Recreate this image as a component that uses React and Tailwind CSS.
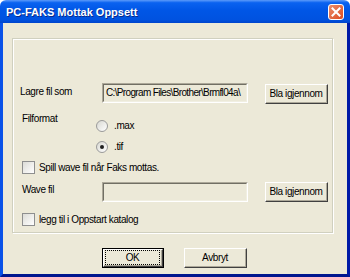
import React from 'react';

const font = { fontFamily: '"Liberation Sans", Arial, sans-serif' };

const ClassicButton = ({ children, isDefault = false, className = '' }) => (
  <div
    className={`flex items-center justify-center bg-[#ECE9D8] text-[10px] tracking-[-0.4px] text-black ${
      isDefault ? 'border border-black' : ''
    } ${className}`}
  >
    <div className="w-full h-full border-t border-l border-white border-r border-b border-r-[#404040] border-b-[#404040] flex items-center justify-center">
      <div className="w-full h-full border-r border-b border-[#ACA899] flex items-center justify-center">
        {isDefault ? (
          <span className="border border-dotted border-black px-[20px] leading-[13px]">{children}</span>
        ) : (
          <span className="leading-[13px] whitespace-nowrap">{children}</span>
        )}
      </div>
    </div>
  </div>
);

const Field = ({ value = '' }) => (
  <div className="w-[146px] h-[20px] border-t border-l border-[#ACA899] border-r border-b border-r-white border-b-white">
    <div className="w-full h-full border-t border-l border-[#716F64] border-r border-b border-r-[#F1EFE2] border-b-[#F1EFE2] bg-[#ECE9D8] leading-[16px] pl-[2px] tracking-[-0.65px] whitespace-nowrap overflow-hidden">
      {value}
    </div>
  </div>
);

const Checkbox = () => (
  <div className="w-[13px] h-[13px] border border-[#8E8F8F] bg-[linear-gradient(135deg,#dcdcd7,#ffffff)] shrink-0" />
);

const Radio = ({ checked }) => (
  <div className="w-[12px] h-[12px] rounded-full border border-[#9a9a9a] bg-[linear-gradient(135deg,#d8d8d2,#ffffff)] flex items-center justify-center shrink-0">
    {checked && <div className="w-[4px] h-[4px] rounded-full bg-[#1f1f1f]" />}
  </div>
);

export default function App() {
  return (
    <div className="w-[350px] h-[277px] flex flex-col overflow-hidden" style={font}>
      {/* title bar */}
      <div className="h-[23px] flex items-center justify-between pl-[6px] pr-[6px] rounded-t-[6px] bg-[linear-gradient(180deg,#5c9bfa_0%,#0a62f0_12%,#0056e6_45%,#0052e0_85%,#0045cc_100%)]">
        <span className="text-white font-bold text-[11px] [text-shadow:1px_1px_0_#0a2a8a] mt-[2px]">
          PC-FAKS Mottak Oppsett
        </span>
        <div className="w-[16px] h-[16px] mt-[1px] rounded-[3px] border border-white bg-[linear-gradient(135deg,#e98d6c,#dd4b21)] flex items-center justify-center">
          <svg width="10" height="10" viewBox="0 0 10 10">
            <path d="M1.5 1.5 L8.5 8.5 M8.5 1.5 L1.5 8.5" stroke="white" strokeWidth="2" strokeLinecap="square" />
          </svg>
        </div>
      </div>

      {/* body */}
      <div className="flex-1 flex flex-col bg-[#ECE9D8] border-l-[3px] border-l-[#0a52e8] border-r-[3px] border-r-[#0019a6] border-b-[3px] border-b-[#00168e] pl-[9px] pr-[14px] pt-[15px]">
        {/* group box */}
        <div className="h-[195px] border border-[#D0D0BF] shadow-[inset_1px_1px_0_#ffffff,1px_1px_0_#ffffff] flex flex-col pl-[7px] text-[10px] tracking-[-0.4px] text-black">
          <div className="mt-[44px] flex items-start h-[21px]">
            <span className="w-[82px] mt-[2px] leading-[13px]">Lagre fil som</span>
            <Field value="C:\Program Files\Brother\Brmfl04a\" />
            <ClassicButton className="ml-[17px] mt-[1px] w-[63px] h-[20px]">Bla igjennom</ClassicButton>
          </div>

          <div className="flex mt-[8px]">
            <span className="w-[76px] pl-[2px] leading-[13px]">Filformat</span>
            <div className="flex flex-col mt-[7px]">
              <div className="flex items-center h-[13px]">
                <Radio />
                <span className="ml-[6px] leading-[13px]">.max</span>
              </div>
              <div className="flex items-center h-[13px] mt-[8px]">
                <Radio checked />
                <span className="ml-[6px] leading-[13px]">.tif</span>
              </div>
            </div>
          </div>

          <div className="flex items-center mt-[8px] pl-[2px] h-[13px]">
            <Checkbox />
            <span className="ml-[4px] leading-[13px]">Spill wave fil når Faks mottas.</span>
          </div>

          <div className="flex items-start mt-[8px] h-[21px]">
            <span className="w-[82px] pl-[2px] mt-[1px] leading-[13px]">Wave fil</span>
            <Field />
            <ClassicButton className="ml-[17px] w-[63px] h-[20px]">Bla igjennom</ClassicButton>
          </div>

          <div className="flex items-center mt-[10px] pl-[2px] h-[13px]">
            <Checkbox />
            <span className="ml-[4px] leading-[13px]">legg til i Oppstart katalog</span>
          </div>
        </div>

        <div className="flex mt-[15px] pl-[90px]">
          <ClassicButton isDefault className="w-[62px] h-[20px]">OK</ClassicButton>
          <ClassicButton className="ml-[20px] w-[63px] h-[20px]">Avbryt</ClassicButton>
        </div>
      </div>
    </div>
  );
}
